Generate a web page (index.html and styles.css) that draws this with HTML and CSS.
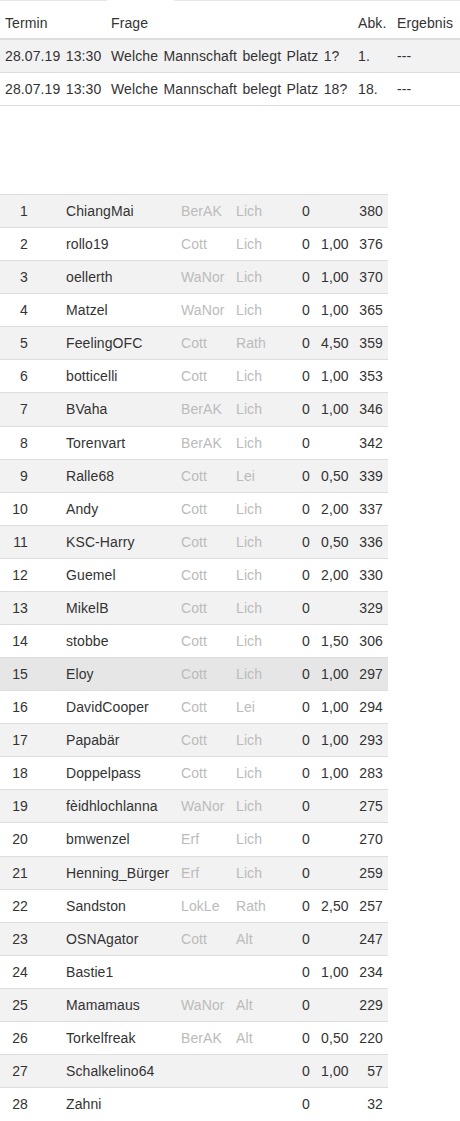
FILE: index.html
```html
<!DOCTYPE html>
<html lang="de">
<head>
<meta charset="utf-8">
<title>Tipps</title>
<link rel="stylesheet" href="styles.css">
</head>
<body>
<div class="tabline"><span class="seg seg-a"></span><span class="seg seg-gap"></span><span class="seg seg-b"></span></div>
<table class="fragen">
  <colgroup><col class="c-termin"><col class="c-frage"><col class="c-abk"><col class="c-erg"></colgroup>
  <thead>
    <tr><th>Termin</th><th>Frage</th><th>Abk.</th><th>Ergebnis</th></tr>
  </thead>
  <tbody>
    <tr class="odd"><td>28.07.19 13:30</td><td>Welche Mannschaft belegt Platz 1?</td><td>1.</td><td>---</td></tr>
    <tr><td>28.07.19 13:30</td><td>Welche Mannschaft belegt Platz 18?</td><td>18.</td><td>---</td></tr>
  </tbody>
</table>

<table class="rang">
  <colgroup><col class="c-rank"><col class="c-name"><col class="c-club"><col class="c-club2"><col class="c-zero"><col class="c-fak"><col class="c-pts"></colgroup>
  <tbody>
    <tr class="odd"><td class="rank">1</td><td>ChiangMai</td><td class="club">BerAK</td><td class="club">Lich</td><td>0</td><td></td><td class="pts">380</td></tr>
    <tr><td class="rank">2</td><td>rollo19</td><td class="club">Cott</td><td class="club">Lich</td><td>0</td><td>1,00</td><td class="pts">376</td></tr>
    <tr class="odd"><td class="rank">3</td><td>oellerth</td><td class="club">WaNor</td><td class="club">Lich</td><td>0</td><td>1,00</td><td class="pts">370</td></tr>
    <tr><td class="rank">4</td><td>Matzel</td><td class="club">WaNor</td><td class="club">Lich</td><td>0</td><td>1,00</td><td class="pts">365</td></tr>
    <tr class="odd"><td class="rank">5</td><td>FeelingOFC</td><td class="club">Cott</td><td class="club">Rath</td><td>0</td><td>4,50</td><td class="pts">359</td></tr>
    <tr><td class="rank">6</td><td>botticelli</td><td class="club">Cott</td><td class="club">Lich</td><td>0</td><td>1,00</td><td class="pts">353</td></tr>
    <tr class="odd"><td class="rank">7</td><td>BVaha</td><td class="club">BerAK</td><td class="club">Lich</td><td>0</td><td>1,00</td><td class="pts">346</td></tr>
    <tr><td class="rank">8</td><td>Torenvart</td><td class="club">BerAK</td><td class="club">Lich</td><td>0</td><td></td><td class="pts">342</td></tr>
    <tr class="odd"><td class="rank">9</td><td>Ralle68</td><td class="club">Cott</td><td class="club">Lei</td><td>0</td><td>0,50</td><td class="pts">339</td></tr>
    <tr><td class="rank">10</td><td>Andy</td><td class="club">Cott</td><td class="club">Lich</td><td>0</td><td>2,00</td><td class="pts">337</td></tr>
    <tr class="odd"><td class="rank">11</td><td>KSC-Harry</td><td class="club">Cott</td><td class="club">Lich</td><td>0</td><td>0,50</td><td class="pts">336</td></tr>
    <tr><td class="rank">12</td><td>Guemel</td><td class="club">Cott</td><td class="club">Lich</td><td>0</td><td>2,00</td><td class="pts">330</td></tr>
    <tr class="odd"><td class="rank">13</td><td>MikelB</td><td class="club">Cott</td><td class="club">Lich</td><td>0</td><td></td><td class="pts">329</td></tr>
    <tr><td class="rank">14</td><td>stobbe</td><td class="club">Cott</td><td class="club">Lich</td><td>0</td><td>1,50</td><td class="pts">306</td></tr>
    <tr class="hl"><td class="rank">15</td><td>Eloy</td><td class="club">Cott</td><td class="club">Lich</td><td>0</td><td>1,00</td><td class="pts">297</td></tr>
    <tr><td class="rank">16</td><td>DavidCooper</td><td class="club">Cott</td><td class="club">Lei</td><td>0</td><td>1,00</td><td class="pts">294</td></tr>
    <tr class="odd"><td class="rank">17</td><td>Papabär</td><td class="club">Cott</td><td class="club">Lich</td><td>0</td><td>1,00</td><td class="pts">293</td></tr>
    <tr><td class="rank">18</td><td>Doppelpass</td><td class="club">Cott</td><td class="club">Lich</td><td>0</td><td>1,00</td><td class="pts">283</td></tr>
    <tr class="odd"><td class="rank">19</td><td>fèidhlochlanna</td><td class="club">WaNor</td><td class="club">Lich</td><td>0</td><td></td><td class="pts">275</td></tr>
    <tr><td class="rank">20</td><td>bmwenzel</td><td class="club">Erf</td><td class="club">Lich</td><td>0</td><td></td><td class="pts">270</td></tr>
    <tr class="odd"><td class="rank">21</td><td>Henning_Bürger</td><td class="club">Erf</td><td class="club">Lich</td><td>0</td><td></td><td class="pts">259</td></tr>
    <tr><td class="rank">22</td><td>Sandston</td><td class="club">LokLe</td><td class="club">Rath</td><td>0</td><td>2,50</td><td class="pts">257</td></tr>
    <tr class="odd"><td class="rank">23</td><td>OSNAgator</td><td class="club">Cott</td><td class="club">Alt</td><td>0</td><td></td><td class="pts">247</td></tr>
    <tr><td class="rank">24</td><td>Bastie1</td><td class="club"></td><td class="club"></td><td>0</td><td>1,00</td><td class="pts">234</td></tr>
    <tr class="odd"><td class="rank">25</td><td>Mamamaus</td><td class="club">WaNor</td><td class="club">Alt</td><td>0</td><td></td><td class="pts">229</td></tr>
    <tr><td class="rank">26</td><td>Torkelfreak</td><td class="club">BerAK</td><td class="club">Alt</td><td>0</td><td>0,50</td><td class="pts">220</td></tr>
    <tr class="odd"><td class="rank">27</td><td>Schalkelino64</td><td class="club"></td><td class="club"></td><td>0</td><td>1,00</td><td class="pts">57</td></tr>
    <tr><td class="rank">28</td><td>Zahni</td><td class="club"></td><td class="club"></td><td>0</td><td></td><td class="pts">32</td></tr>
  </tbody>
</table>
</body>
</html>
```

FILE: styles.css
```css
html, body {
  margin: 0;
  padding: 0;
  background: #ffffff;
}
body {
  font-family: "Liberation Sans", Arial, sans-serif;
  font-size: 14px;
  line-height: 20px;
  color: #333333;
  letter-spacing: 0.1px;
  word-spacing: 1.5px;
}
.tabline {
  display: flex;
  height: 1px;
}
.seg { display: block; height: 1px; }
.seg-a { width: 107px; background: #e6e6e6; }
.seg-gap { width: 67px; background: transparent; }
.seg-b { flex: 1; background: #e6e6e6; }

table {
  border-collapse: collapse;
  table-layout: fixed;
  border-spacing: 0;
}
td, th {
  padding: 6px 5px;
  text-align: left;
  white-space: nowrap;
  overflow: hidden;
  font-weight: normal;
  vertical-align: middle;
}

.fragen {
  width: 460px;
  margin-top: -1px;
}
.c-termin { width: 106px; }
.c-frage { width: 247px; }
.c-abk { width: 39px; }
.c-erg { width: 68px; }
.fragen th {
  padding: 13px 5px 5px 5px;
  border-bottom: 2px solid #dddddd;
}
.fragen td {
  border-bottom: 1px solid #dddddd;
}
.fragen th:last-child, .fragen td:last-child { padding-right: 0; overflow: visible; }

.rang {
  width: 388px;
  margin-top: 88px;
  line-height: 20.08px;
}
.rang td {
  border-top: 1px solid #dddddd;
}
.c-rank { width: 61px; }
.c-name { width: 115px; }
.c-club { width: 55px; }
.c-club2 { width: 66px; }
.c-zero { width: 19px; }
.c-fak { width: 37px; }
.c-pts { width: 35px; }
.rang td.rank {
  text-align: right;
  padding-right: 33px;
}
.rang td.club { color: #bbbbbb; }
.rang td.pts { text-align: right; }

tr.odd td { background: #f2f2f2; }
tr.hl td { background: #e6e6e6; }
```
